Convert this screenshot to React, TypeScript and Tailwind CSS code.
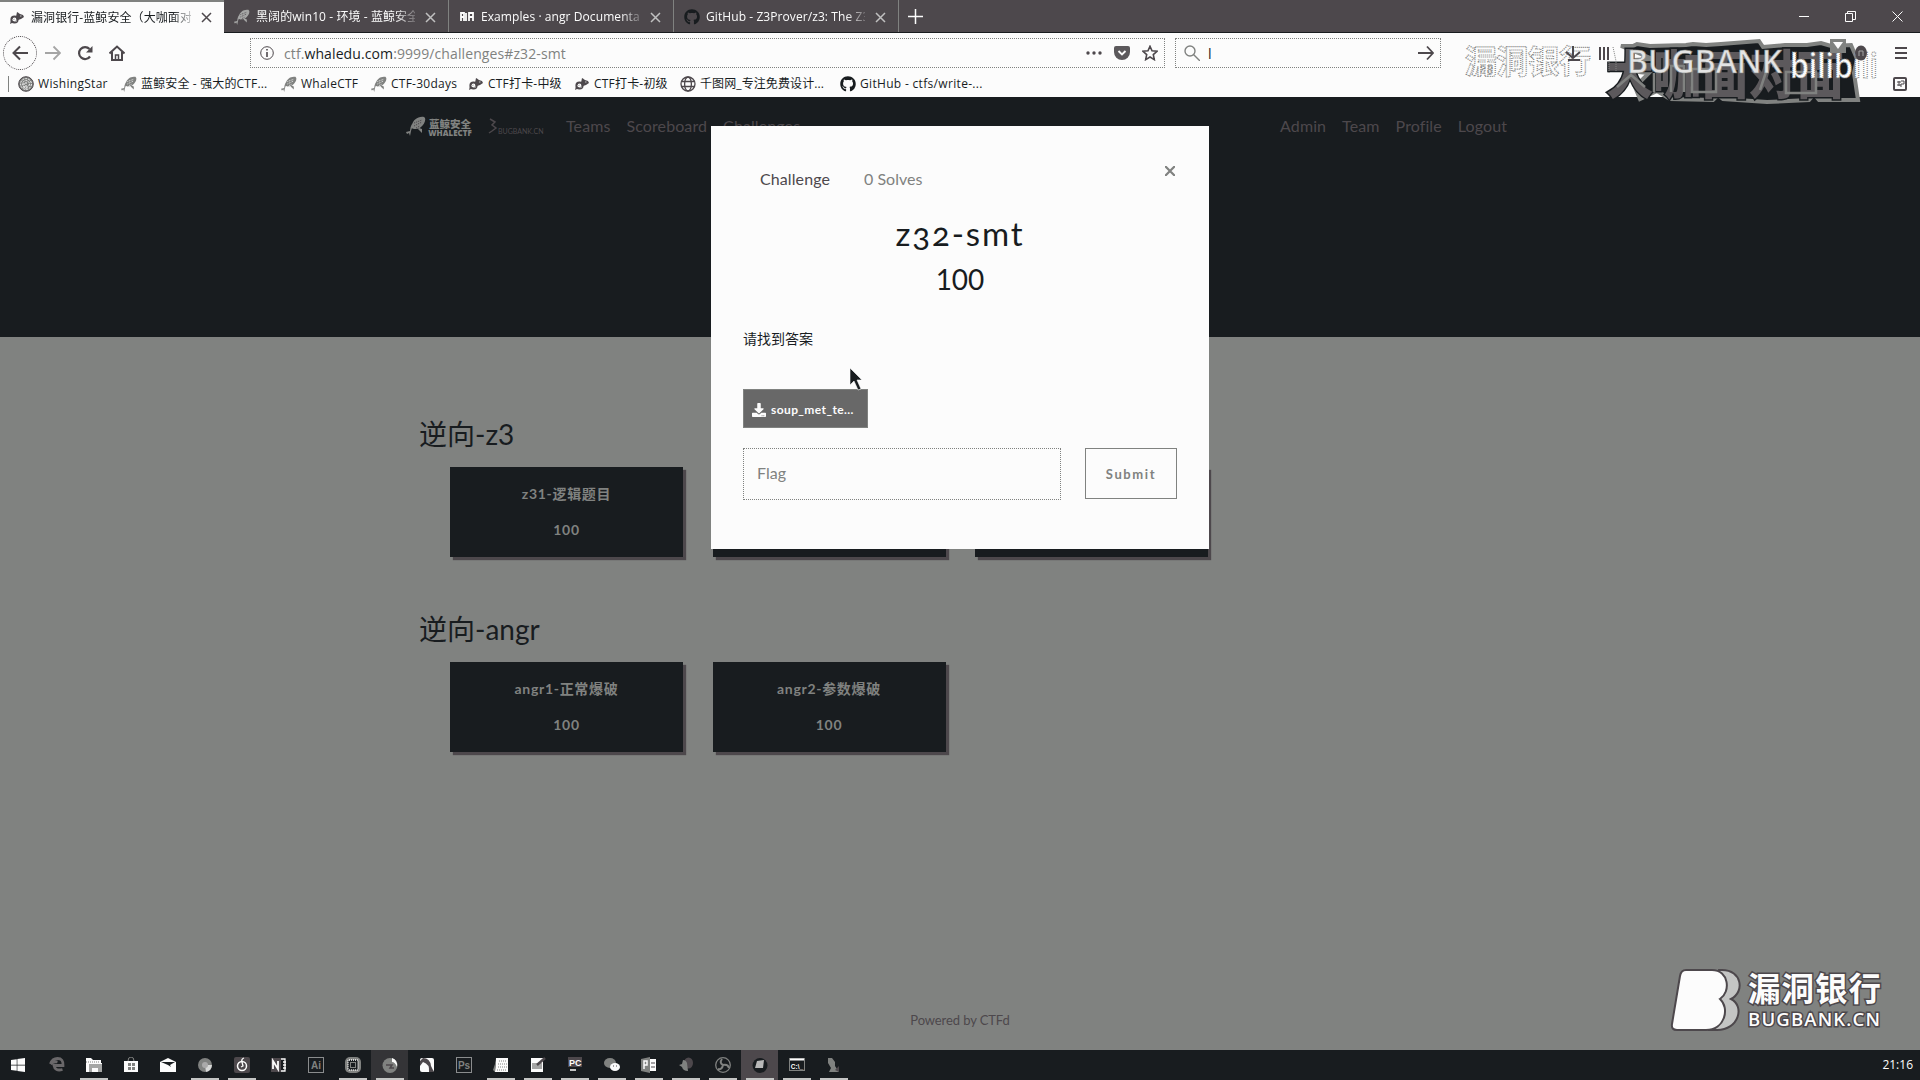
import React from "react";
import { FaDownload, FaGithub, FaWindows } from "react-icons/fa";

function Whale({ className = "", color = "#808280", spot = "#fcfcfc" }: { className?: string; color?: string; spot?: string }) {
  return (
    <svg className={className} viewBox="0 0 20 20" fill={color}>
      <path d="M6 9C7 4 12 0 18 1c3 2 0 8-3 10-2 2-5 2-7 2l-3-1z" />
      <path d="M6 8q-2 3-2 7l-4 1 1 2 2-1 1 3 1-5q1-4 3-6z" />
      <path d="M13 12l3 1v4l-4-4z" />
      <path d="M8 7l8-3M8 10l8-4M10 12l4-2" stroke={spot} strokeWidth="1" strokeDasharray="1.2 1" />
    </svg>
  );
}

function Fish({ className = "" }: { className?: string }) {
  return (
    <svg className={className} viewBox="0 0 16 16">
      <path d="M8 2l3 2 3 1 1 2-3 2-3 1-2-3z" fill="#4d484c" />
      <circle cx="5.5" cy="9.500" r="3" fill="none" stroke="#4d484c" strokeWidth="2.200" />
      <path d="M9 2l1 7-3-1zM5 12l-4 2 1-4z" fill="#4d484c" />
      <path d="M3 10l3-1M11 6h1.500M6 11h2" stroke="#c4c5c4" />
    </svg>
  );
}

function Globe() {
  return (
    <svg className="h-4 w-4" viewBox="0 0 16 16" fill="none" stroke="#4d484c" strokeWidth="1.3">
      <circle cx="8" cy="8" r="7" />
      <ellipse cx="8" cy="8" rx="3.4" ry="7" />
      <path d="M1.5 5.5h13M1.5 10.5h13" />
    </svg>
  );
}

function Fingerprint() {
  return (
    <svg className="h-4 w-4" viewBox="0 0 16 16" fill="none" stroke="#4d484c" strokeWidth="1">
      <circle cx="8" cy="8" r="7.3" fill="#808280" />
      <g stroke="#fcfcfc" strokeDasharray="2 1">
        <circle cx="8" cy="8" r="5.4" />
        <circle cx="8" cy="8" r="3.4" />
        <path d="M8 6v7M6 7v5" />
      </g>
    </svg>
  );
}

function Cross({ color }: { color: string }) {
  return (
    <svg className="h-[11px] w-[11px] shrink-0" viewBox="0 0 11 11" stroke={color} strokeWidth="1.5">
      <path d="M1 1l9 9M10 1l-9 9" />
    </svg>
  );
}

const tabs = [
  { icon: <Fish className="h-4 w-4" />, text: "漏洞银行-蓝鲸安全（大咖面对面", active: true },
  { icon: <Whale className="h-4 w-4" color="#a5a6a5" spot="#4d484c" />, text: "黑阔的win10 - 环境 - 蓝鲸安全" },
  {
    icon: (
      <svg className="h-4 w-4" viewBox="0 0 16 16" fill="none" stroke="#fcfcfc" strokeWidth="1.8">
        <path d="M2 12V4h3v8M2 8h3M7 4v8M10 12V4h4v8M10 8h4" />
      </svg>
    ),
    text: "Examples · angr Documentation",
  },
  { icon: <FaGithub size={16} color="#181c1f" />, text: "GitHub - Z3Prover/z3: The Z3" },
];

function TabBar() {
  return (
    <div className="flex h-[33px] border-b border-[#181c1f] bg-[#4d484c] text-[12px]">
      {tabs.map((t) => (
        <div
          key={t.text}
          className={
            t.active
              ? "flex h-[33px] w-[224px] shrink-0 items-center border-t-2 border-[#808280] bg-[#fcfcfc] pr-3 pl-[9px] text-[#181c1f]"
              : "flex h-8 w-[225px] shrink-0 items-center border-r border-[#808280] pt-[2px] pr-3 pl-[10px] text-[#fcfcfc]"
          }
        >
          <span className="mr-[6px] w-4 shrink-0">{t.icon}</span>
          <span className="mr-[10px] w-[161px] overflow-hidden leading-[22px] tracking-[0.08px] whitespace-nowrap [mask-image:linear-gradient(to_right,black_88%,transparent_104%)]">
            {t.text}
          </span>
          <Cross color={t.active ? "#4d484c" : "#c0c0c0"} />
        </div>
      ))}
      <svg className="mt-[9px] ml-[9px] h-[15px] w-[15px]" viewBox="0 0 15 15" stroke="#fcfcfc" strokeWidth="1.5">
        <path d="M7.5 0v15M0 7.5h15" />
      </svg>
      <div className="mr-[17px] ml-auto flex items-center gap-[36px]">
        <svg className="h-[10px] w-[10px]" viewBox="0 0 10 10" stroke="#fcfcfc">
          <path d="M0 5.5h10" />
        </svg>
        <svg className="h-[11px] w-[11px]" viewBox="0 0 11 11" stroke="#fcfcfc" fill="none">
          <path d="M.5 2.5h7v8h-7zM2.500 2V.5h8v8H8" />
        </svg>
        <svg className="h-[11px] w-[11px]" viewBox="0 0 11 11" stroke="#fcfcfc">
          <path d="M.5.5l10 10M10.500.5l-10 10" />
        </svg>
      </div>
    </div>
  );
}

function Toolbar() {
  return (
    <div className="flex h-10 items-center">
      <div className="ml-[3px] flex h-[34px] w-[34px] items-center justify-center rounded-full border border-dotted border-[#4d484c]">
        <svg className="h-4 w-4" viewBox="0 0 16 16" fill="none" stroke="#4d484c" strokeWidth="2">
          <path d="M16 8H1.500M8 1.500L1.500 8 8 14.500" />
        </svg>
      </div>
      <svg className="ml-2 h-4 w-4" viewBox="0 0 16 16" fill="none" stroke="#a5a5a5" strokeWidth="1.800">
        <path d="M0 8h14.500M8.500 1.500L15 8l-6.500 6.500" />
      </svg>
      <svg className="ml-4 h-4 w-4" viewBox="0 0 16 16" fill="none" stroke="#4d484c" strokeWidth="2.200">
        <path d="M13 11.500A6 6 0 1 1 12.500 4" />
        <path d="M15.500 1v6.500H9z" fill="#4d484c" stroke="none" />
      </svg>
      <svg className="ml-4 h-4 w-4" viewBox="0 0 16 16" fill="none" stroke="#4d484c" strokeWidth="2">
        <path d="M.5 8.500L8 1.500l7.500 7M3 7v8h10V7" />
        <path d="M6.500 15v-5h3v5" strokeWidth="1.500" />
      </svg>
      <div className="ml-[125px] flex h-[30px] w-[915px] items-center border border-dotted border-[#808280] pr-[6px] pl-[9px]">
        <svg className="h-[14px] w-[14px]" viewBox="0 0 14 14" fill="none" stroke="#4d484c">
          <circle cx="7" cy="7" r="6.300" />
          <path d="M7 3v1.500M7 6v5" strokeWidth="1.600" />
        </svg>
        <span className="ml-[10px] text-[14px] tracking-[0.1px] text-[#808280]">
          ctf.<span className="text-[#181c1f]">whaledu.com</span>:9999/challenges#z32-smt
        </span>
        <svg className="ml-auto h-4 w-4" viewBox="0 0 16 16" fill="#4d484c">
          <circle cx="2" cy="8" r="1.700" />
          <circle cx="8" cy="8" r="1.700" />
          <circle cx="14" cy="8" r="1.700" />
        </svg>
        <svg className="ml-[12px] h-4 w-4" viewBox="0 0 16 16">
          <path d="M2 1h12q2 0 2 2v4a8 8 0 0 1-16 0V3q0-2 2-2z" fill="#5c595c" />
          <path d="M4.500 6L8 9.500 11.500 6" fill="none" stroke="#fcfcfc" strokeWidth="1.900" />
        </svg>
        <svg className="ml-[12px] h-4 w-4" viewBox="0 0 16 16" fill="none" stroke="#4d484c" strokeWidth="1.600">
          <path d="M8 1.300l2 4.500 5 .5-3.700 3.300 1 5L8 12l-4.300 2.600 1-5L1 6.300l5-.5z" />
        </svg>
      </div>
      <div className="ml-[10px] flex h-[30px] w-[266px] items-center border border-dotted border-[#808280] pr-[6px] pl-[8px]">
        <svg className="h-4 w-4" viewBox="0 0 16 16" fill="none" stroke="#808280" strokeWidth="1.400">
          <circle cx="6" cy="6" r="5" />
          <path d="M9.500 9.500L16 16" />
        </svg>
        <span className="ml-[8px] text-[14px] text-[#181c1f]">l</span>
        <svg className="ml-auto h-4 w-4" viewBox="0 0 16 16" fill="none" stroke="#4d484c" strokeWidth="1.800">
          <path d="M0 8h15M9 1.500L15 8l-6 6.500" />
        </svg>
      </div>
      <svg className="mr-[13px] ml-auto h-3 w-3" viewBox="0 0 12 12" stroke="#4d484c" strokeWidth="2">
        <path d="M0 1h12M0 6h12M0 11h12" />
      </svg>
    </div>
  );
}

const bookmarks = [
  { w: "w-[103px] tracking-[0.3px]", icon: <Fingerprint />, text: "WishingStar" },
  { w: "w-[160px] tracking-[0.15px]", icon: <Whale className="h-4 w-4" />, text: "蓝鲸安全 - 强大的CTF..." },
  { w: "w-[90px] tracking-[0.25px]", icon: <Whale className="h-4 w-4" />, text: "WhaleCTF" },
  { w: "w-[97px] tracking-[0.25px]", icon: <Whale className="h-4 w-4" />, text: "CTF-30days" },
  { w: "w-[106px] tracking-[0.2px]", icon: <Fish className="h-4 w-4" />, text: "CTF打卡-中级" },
  { w: "w-[106px] tracking-[0.2px]", icon: <Fish className="h-4 w-4" />, text: "CTF打卡-初级" },
  { w: "w-[160px] tracking-[0.1px]", icon: <Globe />, text: "千图网_专注免费设计..." },
  { w: "w-[160px] tracking-[0.32px]", icon: <FaGithub size={16} color="#181c1f" />, text: "GitHub - ctfs/write-..." },
];

function Bookmarks() {
  return (
    <div className="flex h-6 items-center pb-[3px] text-[12px] text-[#181c1f]">
      <div className="mr-[9px] ml-2 h-4 w-px bg-[#808280]" />
      {bookmarks.map((b) => (
        <div key={b.text} className={`flex shrink-0 items-center gap-1 whitespace-nowrap ${b.w}`}>
          <span className="w-4 shrink-0">{b.icon}</span>
          <span>{b.text}</span>
        </div>
      ))}
      <svg className="mr-[13px] ml-auto h-[14px] w-[14px]" viewBox="0 0 14 14">
        <rect x="1" y="1" width="12" height="12" rx="1" fill="none" stroke="#4d484c" strokeWidth="2" />
        <path d="M4 5h4M4 8h4M6 4v5M8 4h3v3H8v3" fill="none" stroke="#4d484c" />
      </svg>
    </div>
  );
}

function StreamBanner() {
  return (
    <div className="pointer-events-none absolute top-[38px] left-[1464px] h-[64px] w-[430px]">
      <svg className="h-full w-full overflow-visible" viewBox="0 0 430 64">
        <path
          d="M157 8l12 0 4-2 13 2 36-1 7-1 13 1 15-1 38-3 4 6 22-2 22 0 14-2 10 3 20-1 6 14-3 14 4 27-39 0-5-6-5 6-42 2-44-3-5-4-5 5-43-1-13-8-17 8-5-12 14-14-12-1-1-12 17-1z"
          fill="#181c1f"
          stroke="#808280"
          strokeWidth="4"
        />
        <text
          x="142"
          y="56"
          textLength="238"
          lengthAdjust="spacingAndGlyphs"
          fontFamily="Noto Sans CJK SC, sans-serif"
          fontWeight="900"
          fontSize="52"
          fill="#5c595c"
          stroke="#181c1f"
          strokeWidth="3"
          paintOrder="stroke"
        >
          大咖面对面
        </text>
        <path
          d="M153 49l14-12 14 12M190 54V35M207 54V28h13v26M228 54V31h24v23zM296 52l6-18M322 55V34h30v21z"
          stroke="#808280"
          strokeWidth="2.500"
          fill="none"
        />
        <text
          x="1"
          y="35"
          textLength="126"
          fontFamily="Noto Sans CJK SC, sans-serif"
          fontWeight="700"
          fontSize="32"
          fill="#fcfcfc"
          stroke="#808280"
          strokeWidth="1.200"
          strokeDasharray="1 1"
        >
          漏洞银行
        </text>
        <g stroke="#4d484c" strokeWidth="2" fill="none">
          <path d="M109 8v12M102 14l7 6 7-6M104 22h12M136 9v13M140 9v13M144 9v13" />
        </g>
        <path d="M149 9l3 14M145 24v11M152 24v9" stroke="#808280" strokeDasharray="1 1" />
        <text
          x="163"
          y="35"
          textLength="155"
          lengthAdjust="spacingAndGlyphs"
          fontFamily="Open Sans, sans-serif"
          fontWeight="600"
          fontSize="33"
          fill="#e4e4e4"
          stroke="#808280"
          strokeWidth=".6"
        >
          BUGBANK
        </text>
        <text
          x="326"
          y="40"
          textLength="88"
          lengthAdjust="spacingAndGlyphs"
          fontFamily="Open Sans, sans-serif"
          fontWeight="600"
          fontSize="35"
          fill="#fcfcfc"
          stroke="#808280"
          strokeWidth="1.200"
          strokeDasharray="1 1"
        >
          bilibili
        </text>
        <path d="M366 1h16v14h-16z" fill="#808280" />
        <path d="M369 4h10l-5 7z" fill="#fcfcfc" />
        <ellipse cx="397" cy="15" rx="6" ry="7.500" fill="#4d484c" />
        <path d="M395 18v-5h4v5" stroke="#a5a5a5" fill="none" />
      </svg>
    </div>
  );
}

function SiteHeader() {
  return (
    <div className="h-[240px] bg-[#181c1f] text-[#4d484c]">
      <div className="flex h-[57px] items-center pl-[406px] font-[Lato] text-[16px] tracking-[0.1px]">
        <Whale className="h-5 w-5" spot="#4d484c" />
        <div className="w-[48px] pt-[3px] text-center font-['Noto_Sans_CJK_SC'] tracking-normal text-[#808280]">
          <div className="text-[10.500px] leading-[11px] font-black whitespace-nowrap">蓝鲸安全</div>
          <div className="font-['Open_Sans'] text-[8px] leading-[8px] font-extrabold">WHALECTF</div>
        </div>
        <svg className="ml-[14px] h-4 w-[10px]" viewBox="0 0 10 16" fill="none" stroke="#4d484c" strokeWidth="1.500">
          <path d="M2 1l5 3-3 3 4 3-4 3-3 2" />
        </svg>
        <span className="mt-[11px] w-[68px] text-[7px] tracking-[0px]">BUGBANK.CN</span>
        <div className="flex gap-4">
          <span>Teams</span>
          <span>Scoreboard</span>
          <span>Challenges</span>
        </div>
        <div className="mr-[413px] ml-auto flex gap-4">
          <span>Admin</span>
          <span>Team</span>
          <span>Profile</span>
          <span>Logout</span>
        </div>
      </div>
    </div>
  );
}

function Card({ title }: { title: string }) {
  return (
    <div className="flex h-[90px] w-[233px] flex-col items-center bg-[#181c1f] pt-[18px] text-[14px] leading-[18px] font-bold tracking-[0.7px] text-[#808280] shadow-[3px_3px_1px_#4d484c]">
      <span>{title}</span>
      <span className="mt-[18px]">100</span>
    </div>
  );
}

function Board() {
  const groups = [
    { name: "逆向-z3", cards: ["z31-逻辑题目", "z32-smt", "z33-smt"] },
    { name: "逆向-angr", cards: ["angr1-正常爆破", "angr2-参数爆破"] },
  ];
  return (
    <div className="flex h-[713px] flex-col bg-[#808280] pt-[77px] pl-[419px] font-['Lato','Noto_Sans_CJK_SC',sans-serif]">
      {groups.map((g) => (
        <div key={g.name} className="h-[195px]">
          <h3 className="h-[53px] text-[28px] leading-[40px] text-[#181c1f]">{g.name}</h3>
          <div className="flex gap-[29.500px] pl-[31px]">
            {g.cards.map((c) => (
              <Card key={c} title={c} />
            ))}
          </div>
        </div>
      ))}
      <div className="mt-auto mb-[21px] -ml-[419px] text-center text-[13px] leading-[18px] tracking-[-0.1px] text-[#4d484c]">
        Powered by CTFd
      </div>
    </div>
  );
}

function ChallengeModal() {
  return (
    <div className="absolute top-[126px] left-[711px] flex h-[423px] w-[498px] flex-col bg-[#fcfcfc] px-8 font-['Lato','Noto_Sans_CJK_SC',sans-serif] text-[#181c1f]">
      <div className="mt-[41px] flex h-6 items-center pl-[17px] text-[16px]">
        <span className="tracking-[0.1px] text-[#4d484c]">Challenge</span>
        <span className="ml-[34px] text-[#808280]">0 Solves</span>
        <svg className="mr-[2px] mb-[16px] ml-auto h-[10px] w-[10px]" viewBox="0 0 10 10" stroke="#808280" strokeWidth="2.200">
          <path d="M0 0l10 10M10 0L0 10" />
        </svg>
      </div>
      <h3 className="mt-[20px] text-center text-[33px] leading-[44px] font-normal tracking-[1.900px] [font-feature-settings:'onum']">
        z32-smt
      </h3>
      <div className="mt-[5px] text-center text-[28px] leading-[38px]">100</div>
      <p className="mt-[31px] text-[14px] leading-[20px]">请找到答案</p>
      <div className="mt-[40px] flex h-[39px] w-[125px] items-center border border-[#808280] bg-[#686868] pt-[2px] pl-2 text-[12px] font-bold tracking-[0.4px] text-[#fcfcfc]">
        <FaDownload size={14} />
        <span className="ml-[5px]">soup_met_te...</span>
      </div>
      <div className="mt-[20px] flex gap-6">
        <div className="flex h-[52px] w-[318px] items-center border border-dotted border-[#808280] pb-[2px] pl-[13px] text-[16px] text-[#808280]">
          Flag
        </div>
        <div className="flex h-[51px] w-[92px] items-center justify-center border border-[#808280] pt-[2px] text-[13px] font-bold tracking-[1.600px] text-[#808280]">
          Submit
        </div>
      </div>
      <svg className="absolute top-[241px] left-[138px] h-[25px] w-[15px]" viewBox="0 0 15 25">
        <path d="M1 1v17l4-4 4 9 3-1-4-9h5z" fill="#181c1f" stroke="#fcfcfc" strokeWidth=".6" />
      </svg>
    </div>
  );
}

function BugbankLogo() {
  return (
    <svg className="absolute top-[966px] left-[1668px] h-[70px] w-[220px]" viewBox="0 0 220 70">
      <path d="M54 4c20 0 23 22 9 29 14 7 8 31-14 31h-8l10-60z" fill="#c4c5c4" stroke="#4d484c" strokeWidth="2" />
      <path d="M18 4h26c17 0 19 22 8 29 10 9 5 31-14 31H9q-6 0-5-6l8-48q1-6 6-6z" fill="#fcfcfc" stroke="#4d484c" strokeWidth="2" />
      <g fill="#fcfcfc" stroke="#4d484c" strokeWidth="3" paintOrder="stroke">
        <text x="80" y="35" textLength="133" fontFamily="Noto Sans CJK SC, sans-serif" fontWeight="700" fontSize="32.500">
          漏洞银行
        </text>
        <text x="80" y="59.500" textLength="132" fontFamily="Open Sans, sans-serif" fontWeight="600" fontSize="18.500">
          BUGBANK.CN
        </text>
      </g>
    </svg>
  );
}

const G = "#808280";
const W = "#fcfcfc";
const D = "#4d484c";

function label(text: string, size = 9, fill = W) {
  return (
    <text x="8" y="11.500" textAnchor="middle" fontSize={size} fontWeight="700" fontFamily="Liberation Sans, sans-serif" fill={fill}>
      {text}
    </text>
  );
}

const taskIcons: { art: React.ReactNode; open?: boolean; active?: string }[] = [
  {
    art: (
      <g fill="none" stroke="#6a686a" strokeWidth="2.800">
        <path d="M1.500 7q2-5.500 7-5.500 6 0 5.500 7H5q1 6 8.500 4M1.500 7q3-3 7-2" />
      </g>
    ),
  },
  { art: <g><path d="M0 1h5l2 2h8v3h1v9H0z" fill={W} /><path d="M3 7h13v8h-4v-4H6v4H3z" fill="#a5a6a5" /><path d="M0 5h14" stroke={G} strokeDasharray="1 1" /></g>, open: true },
  { art: <g><path d="M5 4q0-4 3-4t3 4" fill="none" stroke={G} /><path d="M1 4h14v11H1z" fill={W} /><path d="M5 6h3v3H5zM9 6h3v3H9zM5 10h3v3H5zM9 10h3v3H9z" fill={G} /></g> },
  { art: <g><path d="M0 5l8-4 8 4v10H0z" fill={W} /><path d="M1 5h14l-5 3 1 2-3-2z" fill="#181c1f" /></g> },
  { art: <g><circle cx="8" cy="8" r="7" fill={G} /><path d="M8 8h7a7 7 0 0 1-6 7z" fill={W} opacity=".7" /><circle cx="8" cy="8" r="3" fill="#aaa" /></g>, open: true },
  { art: <g><rect width="16" height="16" rx="2" fill={D} /><circle cx="8" cy="9" r="4.500" fill="none" stroke={W} strokeWidth="1.500" /><path d="M10 1q-3 1-2 4l1 4-2 1" stroke={W} fill="none" strokeWidth="1.300" /></g>, open: true },
  { art: <g><path d="M0 1h10v14H0z" fill={D} /><path d="M10 2h4v12h-4M12 5h3M12 8h3M12 11h3" fill="none" stroke={W} strokeWidth="1.300" /><path d="M2 12V4l5 8V4" stroke={W} strokeWidth="1.800" fill="none" /></g> },
  { art: <g><rect x=".5" y=".5" width="15" height="15" fill="none" stroke={W} strokeDasharray="1 1" />{label("Ai", 10, G)}</g> },
  { art: <g><rect width="16" height="16" rx="5" fill={G} /><rect x="3" y="3" width="10" height="10" rx="1" fill="#181c1f" stroke={W} strokeWidth="1.300" strokeDasharray="1 1" /><rect x="5.500" y="5.500" width="5" height="5" fill="#181c1f" stroke={G} /></g>, open: true },
  { art: <g><circle cx="8" cy="8.500" r="7.500" fill={G} /><path d="M10 1q6 2 5 9-2-5-5-5z" fill={W} /><path d="M4 8h6l-2 3h4" fill="none" stroke={D} strokeWidth="1.500" /></g>, open: true, active: "bg-[#343437]" },
  { art: <g><rect x="1" y="1" width="14" height="14" rx="2" fill={W} /><path d="M4 1q7 0 8 8l3 6h-5q1-8-6-10l-3 4V4z" fill={D} /></g> },
  { art: <g><rect x=".5" y=".5" width="15" height="15" fill="none" stroke={W} strokeDasharray="1 1" />{label("Ps", 10, G)}</g> },
  { art: <g><path d="M3 1h12v14H2z" fill={W} /><path d="M3 4l-3 9 2 2z" fill={G} /><path d="M6 4h8M5 7h9M5 10h9M4 13h10" stroke={G} strokeDasharray="1 1" /></g>, open: true },
  { art: <g><path d="M1 1h12v14H1z" fill={W} /><path d="M2 6h10v6H2z" fill="#a5a6a5" /><path d="M15 1L7 8" stroke={D} strokeWidth="2.500" /></g>, open: true },
  { art: <g><rect x="1" width="14" height="10" fill={D} /><text x="2" y="9" fontSize="9" fontWeight="700" fontFamily="Liberation Sans, sans-serif" fill={W}>PC</text><path d="M3 13h6" stroke={W} strokeWidth="1.500" /></g>, open: true },
  { art: <g><ellipse cx="6" cy="6" rx="6" ry="5" fill={G} /><ellipse cx="11" cy="10" rx="5" ry="4" fill={W} /><path d="M9 9h1M12 9h1" stroke={D} /></g>, open: true },
  { art: <g><path d="M0 2l9-2v16l-9-2z" fill={G} /><path d="M9 2h6v12H9z" fill={W} /><path d="M3 12V4h3v4H3" stroke={W} strokeWidth="1.500" fill="none" /><path d="M10 6h4M10 10h4" stroke={D} /></g>, open: true },
  { art: <g><ellipse cx="10.500" cy="6" rx="4.500" ry="5.500" fill={D} /><path d="M5 3q3 0 4 3l1 8q-5 0-6-4l-3-2 3-1z" fill={G} /></g>, open: true },
  { art: <g fill="none" stroke={G} strokeWidth="1.300"><circle cx="8" cy="8" r="7.300" /><path d="M8 8Q4 6 7 2M8 8q5-1 6 3M8 8q-1 5-5 4" strokeWidth="2" /></g>, open: true },
  { art: <g><circle cx="8" cy="8.500" r="7.500" fill="#181c1f" /><path d="M5 4l7-1-1 8H3z" fill="#b8b8b8" /></g>, open: true, active: "bg-[#4d484c]" },
  { art: <g><rect x=".5" y="1.500" width="15" height="12" fill="#181c1f" stroke={G} /><path d="M1 2.500h14" stroke={W} strokeWidth="2" />{label("C:\\_", 6.5)}</g>, open: true },
  { art: <g><path d="M2 1l4 0 3 4 0 4 2 3 2 3H3l2-4-3-5z" fill={G} /><path d="M9 13l4-4v6z" fill={D} /></g>, open: true },
];

function Taskbar() {
  return (
    <div className="flex h-[30px] bg-[#181c1f]">
      <div className="flex w-[38px] items-center pl-[10px]">
        <FaWindows size={16} color="#fcfcfc" />
      </div>
      {taskIcons.map((t, i) => (
        <div key={i} className={`flex h-[30px] w-[37px] shrink-0 flex-col items-center ${t.active ?? ""}`}>
          <svg className="mt-[7px] h-4 w-4" viewBox="0 0 16 16">
            {t.art}
          </svg>
          {t.open && <div className="mt-auto h-[2px] w-7 bg-[#c4c5c4]" />}
        </div>
      ))}
      <div className="mr-[7px] ml-auto self-center pb-px text-[12px] text-[#fcfcfc]">21:16</div>
    </div>
  );
}

export default function App() {
  return (
    <div className="relative h-[1080px] w-[1920px] overflow-hidden bg-[#fcfcfc] font-['Open_Sans','Noto_Sans_CJK_SC',sans-serif]">
      <TabBar />
      <Toolbar />
      <Bookmarks />
      <SiteHeader />
      <Board />
      <Taskbar />
      <StreamBanner />
      <ChallengeModal />
      <BugbankLogo />
    </div>
  );
}
